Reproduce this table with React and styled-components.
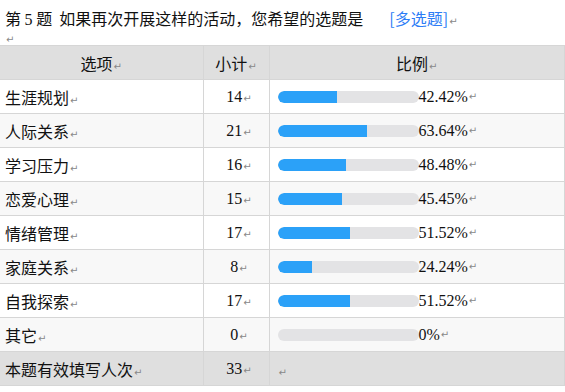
import React from 'react';
import styled, { createGlobalStyle } from 'styled-components';

const GlobalStyle = createGlobalStyle`
  body {
    margin: 0;
    background: #fff;
    font-family: "Noto Sans CJK SC", "Liberation Serif", serif;
    color: #111;
  }
`;

const Page = styled.div`
  width: 565px;
  height: 392px;
  overflow: hidden;
`;

const Title = styled.div`
  padding: 8px 0 0 5px;
  height: 20px;
  line-height: 20px;
  font-size: 16px;
  white-space: nowrap;
`;

const Num = styled.span`
  font-family: "Liberation Serif", serif;
`;

const Tag = styled.span`
  color: #2b7cf6;
  margin-left: 26px;
`;

const Mark = styled.span`
  color: #888;
  font-size: 10px;
  font-family: "DejaVu Sans", sans-serif;
  margin-left: 1px;
`;

const Blank = styled.div`
  height: 17px;
  line-height: 17px;
  padding-left: 5px;
`;

const Table = styled.table`
  width: 565px;
  border-collapse: collapse;
  table-layout: fixed;
  font-size: 16px;
`;

const Row = styled.tr`
  height: 34px;
  background: ${p => (p.$shade ? '#dfdfdf' : p.$alt ? '#f8f8f8' : '#fff')};
`;

const Cell = styled.td`
  border: 1px solid #d6d6d6;
  padding: 0 0 0 ${p => (p.$pad ? p.$pad : 0)}px;
  text-align: ${p => p.$align || 'left'};
  white-space: nowrap;
  vertical-align: middle;
  font-family: ${p => (p.$serif ? '"Liberation Serif", serif' : '"Noto Sans CJK SC", sans-serif')};
  &:first-child { border-left: none; }
`;

const Ratio = styled.div`
  display: flex;
  align-items: center;
  font-family: "Liberation Serif", serif;
`;

const Track = styled.div`
  width: 141px;
  height: 12px;
  border-radius: 6px;
  background: #e3e3e5;
  overflow: hidden;
  flex: none;
`;

const Fill = styled.div`
  height: 100%;
  background: #2ba1f8;
  border-radius: 6px 0 0 6px;
`;

const data = [
  ['生涯规划', 14, '42.42%'],
  ['人际关系', 21, '63.64%'],
  ['学习压力', 16, '48.48%'],
  ['恋爱心理', 15, '45.45%'],
  ['情绪管理', 17, '51.52%'],
  ['家庭关系', 8, '24.24%'],
  ['自我探索', 17, '51.52%'],
  ['其它', 0, '0%'],
];

export default function App() {
  return (
    <Page>
      <GlobalStyle />
      <Title>
        第 <Num>5</Num> 题&nbsp;&nbsp;如果再次开展这样的活动，您希望的选题是
        <Tag>[多选题]</Tag>
        <Mark>↵</Mark>
      </Title>
      <Blank><Mark>↵</Mark></Blank>
      <Table>
        <colgroup>
          <col style={{ width: 203 }} />
          <col style={{ width: 66 }} />
          <col />
        </colgroup>
        <tbody>
          <Row $shade>
            <Cell $align="center">选项<Mark>↵</Mark></Cell>
            <Cell $align="center">小计<Mark>↵</Mark></Cell>
            <Cell $align="center">比例<Mark>↵</Mark></Cell>
          </Row>
          {data.map(([name, count, pct], i) => (
            <Row key={name} $alt={i % 2 === 1}>
              <Cell $pad={5}>{name}<Mark>↵</Mark></Cell>
              <Cell $align="center" $serif $pad={6}>{count}<Mark>↵</Mark></Cell>
              <Cell $pad={8}>
                <Ratio>
                  <Track>
                    <Fill style={{ width: pct }} />
                  </Track>
                  {pct}<Mark>↵</Mark>
                </Ratio>
              </Cell>
            </Row>
          ))}
          <Row $shade>
            <Cell $pad={5}>本题有效填写人次<Mark>↵</Mark></Cell>
            <Cell $align="center" $serif $pad={6}>33<Mark>↵</Mark></Cell>
            <Cell $pad={8}><Mark>↵</Mark></Cell>
          </Row>
        </tbody>
      </Table>
    </Page>
  );
}
